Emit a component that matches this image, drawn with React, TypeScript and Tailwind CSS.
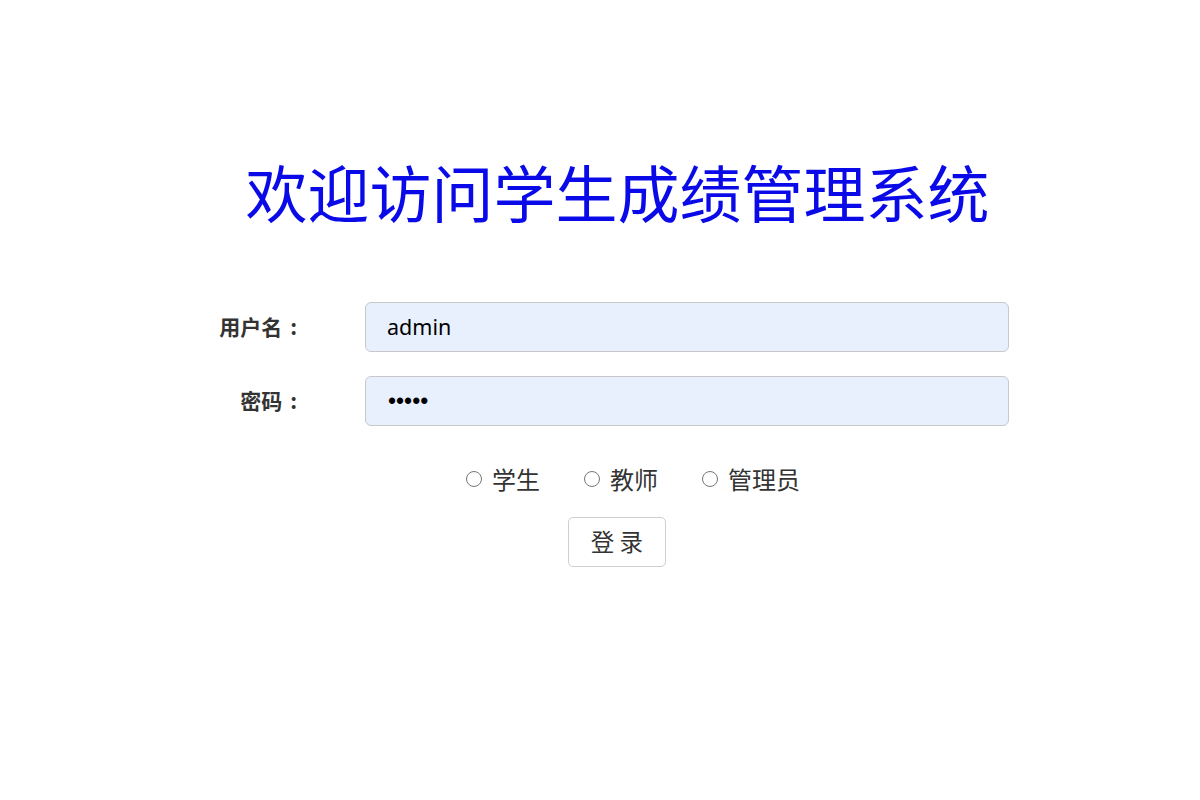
const cjk = { fontFamily: '"Noto Sans CJK SC", "Noto Sans", sans-serif' };

function Radio({ label }: { label: string }) {
  return (
    <label className="flex items-center">
      <span className="w-[16px] h-[16px] rounded-full border border-[#767676] bg-white" />
      <span className="ml-[10px] text-[24px] leading-none text-[#333]">{label}</span>
    </label>
  );
}

export default function App() {
  return (
    <div className="min-h-[800px] bg-white" style={cjk}>
      <div className="ml-[200px] w-[835px] pt-[160px] flex flex-col">
        <h1 className="text-center text-[62px] leading-none text-[#0a0ae8] font-normal">欢迎访问学生成绩管理系统</h1>

        <div className="mt-[80px] flex items-center">
          <div className="w-[97px] text-right text-[21px] font-bold text-[#333]">
            用户名<span className="ml-[8px]">:</span>
          </div>
          <div className="ml-[68px] w-[644px] h-[50px] rounded-[6px] border border-[#c8c8c8] bg-[#e8f0fe] flex items-center pl-[21px]">
            <span className="text-[21.5px] text-black" style={{ fontFamily: '"Noto Sans", sans-serif' }}>admin</span>
          </div>
        </div>

        <div className="mt-[24px] flex items-center">
          <div className="w-[97px] text-right text-[21px] font-bold text-[#333]">
            密码<span className="ml-[8px]">:</span>
          </div>
          <div className="ml-[68px] w-[644px] h-[50px] rounded-[6px] border border-[#c8c8c8] bg-[#e8f0fe] flex items-center pl-[22px]">
            <span className="text-[23px] text-black" style={{ fontFamily: '"Liberation Sans", sans-serif' }}>•••••</span>
          </div>
        </div>

        <div className="mt-[41px] ml-[266px] flex items-center gap-[44px]">
          <Radio label="学生" />
          <Radio label="教师" />
          <Radio label="管理员" />
        </div>

        <div className="mt-[26px] ml-[368px]">
          <button className="w-[98px] h-[50px] rounded-[5px] border border-[#cfcfcf] bg-white text-[23.5px] text-[#333]">
            登 录
          </button>
        </div>
      </div>
    </div>
  );
}
